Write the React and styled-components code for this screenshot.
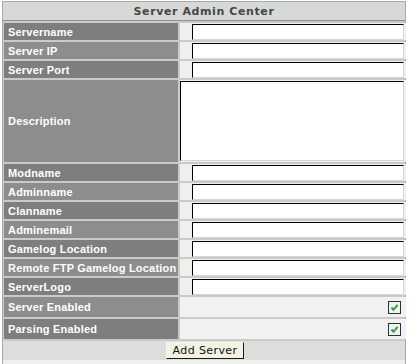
import React from "react";
import styled, { createGlobalStyle } from "styled-components";

const Global = createGlobalStyle`
  html, body { margin: 0; padding: 0; background: #ffffff; }
  body { font-family: "DejaVu Sans", Verdana, sans-serif; }
`;

const Panel = styled.div`
  width: 404px;
  margin: 1px 0 0 2px;
  border: 1px solid #a8aaa8;
  border-bottom: none;
  background: #c9cbc9;
  box-sizing: border-box;
`;

const Header = styled.div`
  height: 18px;
  background: #d7d9d6;
  border-bottom: 1px solid #8e908e;
  display: flex;
  align-items: center;
  justify-content: center;
  font-size: 11px;
  font-weight: bold;
  letter-spacing: 0.6px;
  color: #454745;
`;

const Grid = styled.div`
  display: grid;
  grid-template-columns: 174px 1fr;
  gap: 2px;
  padding: 2px 1px 0 1px;
`;

const Label = styled.div`
  height: ${(p) => p.$h}px;
  background: ${(p) => (p.$alt ? "#8d8d8d" : "#7e7e7e")};
  color: #ffffff;
  font-family: "Liberation Sans", Arial, sans-serif;
  font-size: 11px;
  font-weight: bold;
  letter-spacing: 0.2px;
  display: flex;
  align-items: center;
  padding-left: 4px;
  white-space: nowrap;
  overflow: hidden;
`;

const Value = styled.div`
  height: ${(p) => p.$h}px;
  background: ${(p) => (p.$light ? "#f0f1f0" : "#eef0ee")};
  display: flex;
  align-items: center;
  justify-content: flex-end;
  padding-right: 2px;
`;

const TextInput = styled.input`
  box-sizing: border-box;
  width: 212px;
  height: 16px;
  margin: 0;
  padding: 0 2px;
  background: #ffffff;
  border-style: solid;
  border-width: 1px;
  border-color: #000000 #d6d6d6 #d6d6d6 #000000;
  font-size: 11px;
  outline: none;
`;

const TextArea = styled.textarea`
  box-sizing: border-box;
  width: 224px;
  height: 80px;
  margin: 0;
  padding: 2px;
  resize: none;
  background: #ffffff;
  border-style: solid;
  border-width: 1px;
  border-color: #000000 #d6d6d6 #d6d6d6 #000000;
  outline: none;
`;

const Check = styled.span`
  width: 11px;
  height: 11px;
  border: 1px solid #1e3552;
  background: #eef3f0;
  display: inline-flex;
  align-items: center;
  justify-content: center;
  margin-right: 3px;
`;

const Footer = styled.div`
  height: 19px;
  margin-top: 2px;
  background: #dcdedb;
  display: flex;
  align-items: center;
  justify-content: center;
`;

const Button = styled.button`
  height: 17px;
  padding: 0 6px;
  margin: 0 0 0 2px;
  background: #f3f1e2;
  border-style: solid;
  border-width: 1px;
  border-color: #f8f8f0 #1a1a1a #1a1a1a #f8f8f0;
  font-family: "DejaVu Sans", Verdana, sans-serif;
  font-size: 11px;
  letter-spacing: 0.4px;
  color: #111111;
`;

const Bottom = styled.div`
  height: 6px;
  background: #eef0ee;
`;

const CheckMark = () => (
  <svg width="9" height="9" viewBox="0 0 9 9">
    <path d="M1.5 4.5 L3.5 6.8 L7.6 1.8" fill="none" stroke="#3f9a3f" strokeWidth="2" />
  </svg>
);

const rows = [
  { label: "Servername", type: "input" },
  { label: "Server IP", type: "input" },
  { label: "Server Port", type: "input" },
  { label: "Description", type: "area" },
  { label: "Modname", type: "input" },
  { label: "Adminname", type: "input" },
  { label: "Clanname", type: "input" },
  { label: "Adminemail", type: "input" },
  { label: "Gamelog Location", type: "input" },
  { label: "Remote FTP Gamelog Location", type: "input" },
  { label: "ServerLogo", type: "input" },
  { label: "Server Enabled", type: "check" },
  { label: "Parsing Enabled", type: "check" },
];

export default function App() {
  return (
    <>
      <Global />
      <Panel>
        <Header>Server Admin Center</Header>
        <Grid>
          {rows.map((r, i) => {
            const h = r.type === "area" ? 82 : r.type === "check" ? 20 : 17;
            return (
              <React.Fragment key={r.label}>
                <Label $h={h} $alt={i % 2 === 1}>{r.label}</Label>
                <Value $h={h} $light={r.type === "check"}>
                  {r.type === "input" && <TextInput type="text" />}
                  {r.type === "area" && <TextArea />}
                  {r.type === "check" && (
                    <Check>
                      <CheckMark />
                    </Check>
                  )}
                </Value>
              </React.Fragment>
            );
          })}
        </Grid>
        <Footer>
          <Button>Add Server</Button>
        </Footer>
        <Bottom />
      </Panel>
    </>
  );
}
